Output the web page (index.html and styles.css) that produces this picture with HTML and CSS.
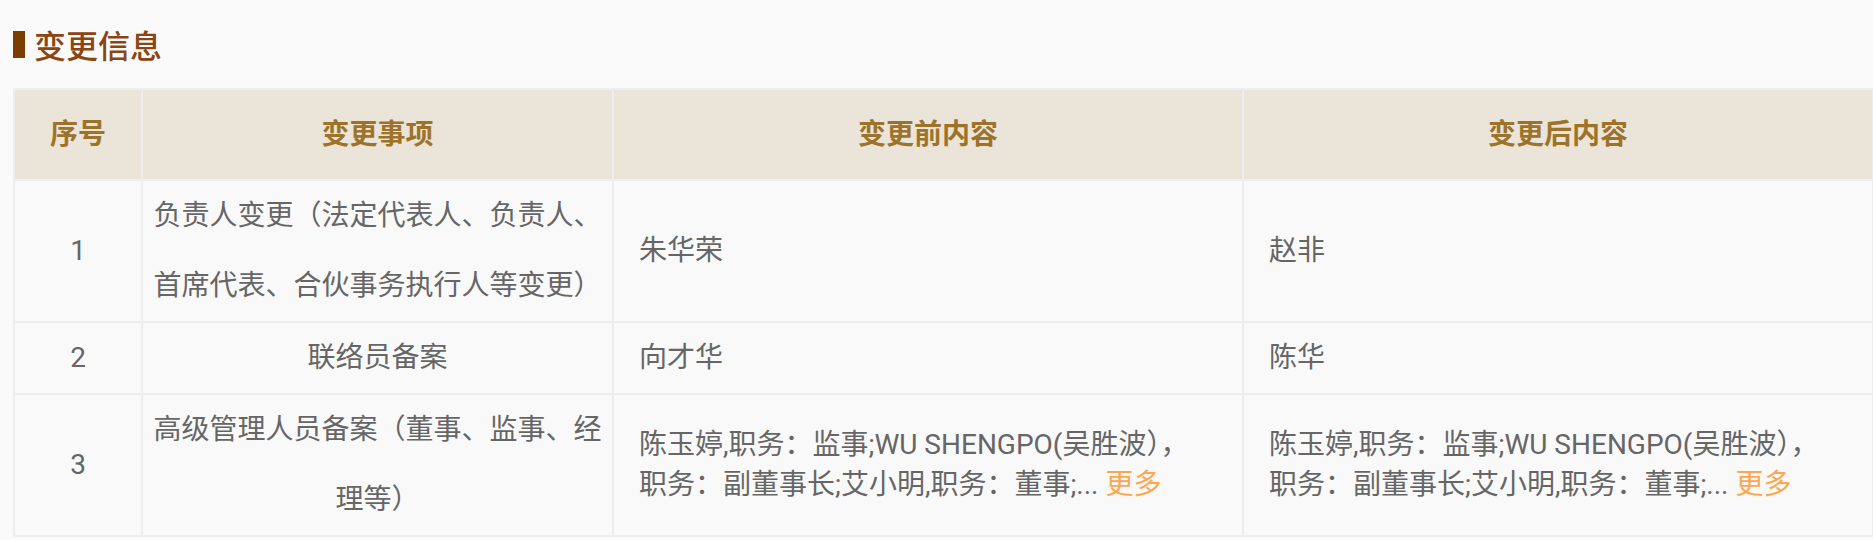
FILE: index.html
```html
<!DOCTYPE html>
<html lang="zh-CN">
<head>
<meta charset="utf-8">
<title>变更信息</title>
<link rel="stylesheet" href="styles.css">
</head>
<body>
<div class="page">
  <h2 class="title"><span class="bar"></span><span class="title-text">变更信息</span></h2>
  <table class="changes">
    <thead>
      <tr>
        <th class="c-no">序号</th>
        <th class="c-item">变更事项</th>
        <th class="c-before">变更前内容</th>
        <th class="c-after">变更后内容</th>
      </tr>
    </thead>
    <tbody>
      <tr>
        <td class="center">1</td>
        <td class="center">负责人变更（法定代表人、负责人、首席代表、合伙事务执行人等变更）</td>
        <td class="content">朱华荣</td>
        <td class="content">赵非</td>
      </tr>
      <tr>
        <td class="center">2</td>
        <td class="center">联络员备案</td>
        <td class="content">向才华</td>
        <td class="content">陈华</td>
      </tr>
      <tr>
        <td class="center">3</td>
        <td class="center">高级管理人员备案（董事、监事、经理等）</td>
        <td class="content"><div class="detail">陈玉婷,职务：监事;WU SHENGPO(吴胜波），职务：副董事长;艾小明,职务：董事;... <a class="more" href="#">更多</a></div></td>
        <td class="content"><div class="detail">陈玉婷,职务：监事;WU SHENGPO(吴胜波），职务：副董事长;艾小明,职务：董事;... <a class="more" href="#">更多</a></div></td>
      </tr>
    </tbody>
  </table>
</div>
</body>
</html>
```
FILE: styles.css
```css
html, body {
  margin: 0;
  padding: 0;
  background: #fafafa;
  overflow: hidden;
}

.page {
  padding-left: 13px;
  font-family: "Roboto", "Noto Sans CJK SC", sans-serif;
}

.title {
  display: flex;
  align-items: center;
  gap: 9px;
  margin: 0 0 28px 0;
  padding-top: 28px;
  font-family: "Noto Sans CJK SC", sans-serif;
  font-size: 32px;
  line-height: 32px;
  font-weight: 500;
  color: #8b4513;
}

.bar {
  display: block;
  width: 12px;
  height: 27px;
  background: #7c3d00;
}

.changes {
  width: 1861px;
  table-layout: fixed;
  border-collapse: separate;
  border-spacing: 0;
  border-left: 2px solid #eeeeee;
  border-top: 2px solid #eeeeee;
  font-size: 28px;
  color: #666666;
}

.changes th,
.changes td {
  box-sizing: border-box;
  border-right: 2px solid #eeeeee;
  border-bottom: 2px solid #eeeeee;
  padding: 0;
  vertical-align: middle;
}

.changes th {
  height: 91px;
  line-height: 89px;
  background: #ebe4d9;
  color: #9d7329;
  font-weight: bold;
  text-align: center;
}

.c-no { width: 128px; }
.c-item { width: 471px; }
.c-before { width: 630px; }
.c-after { width: 630px; }

.changes td {
  background: #f9f9f9;
  line-height: 70px;
}

.changes td.center {
  text-align: center;
  padding: 0 10px;
}

.changes td.content {
  text-align: left;
  padding: 0 30px 0 25px;
}

.detail {
  line-height: 40px;
}

.more {
  color: #ffa64d;
  text-decoration: none;
}
```
